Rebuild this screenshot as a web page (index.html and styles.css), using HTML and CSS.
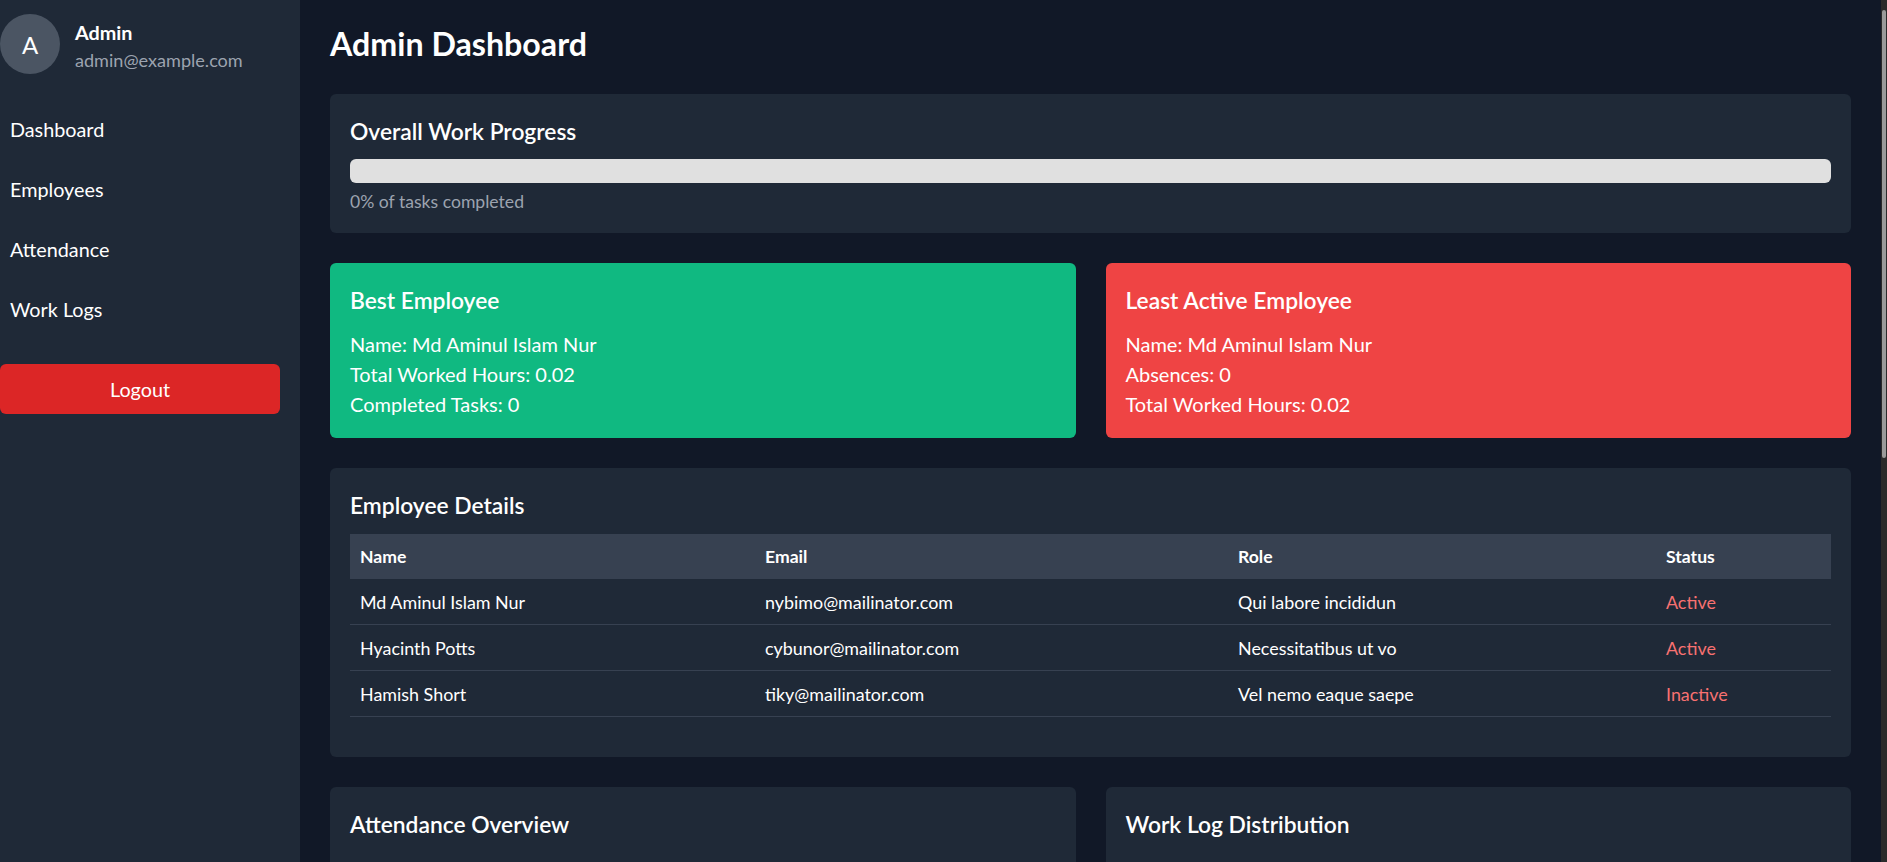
FILE: index.html
```html
<!DOCTYPE html>
<html lang="en">
<head>
<meta charset="utf-8">
<title>Admin Dashboard</title>
<link rel="stylesheet" href="styles.css">
</head>
<body>
<div class="layout">
  <aside class="sidebar">
    <div class="profile">
      <div class="avatar">A</div>
      <div class="who">
        <div class="who-name">Admin</div>
        <div class="who-email">admin@example.com</div>
      </div>
    </div>
    <nav class="nav">
      <a class="nav-link" href="#">Dashboard</a>
      <a class="nav-link" href="#">Employees</a>
      <a class="nav-link" href="#">Attendance</a>
      <a class="nav-link" href="#">Work Logs</a>
    </nav>
    <button class="logout" type="button">Logout</button>
  </aside>

  <main class="main">
    <h1 class="page-title">Admin Dashboard</h1>

    <section class="card progress-card">
      <h2 class="card-title">Overall Work Progress</h2>
      <div class="progress-track"><div class="progress-fill" style="width:0%"></div></div>
      <p class="progress-label">0% of tasks completed</p>
    </section>

    <div class="grid-2">
      <section class="card card-green">
        <h2 class="card-title">Best Employee</h2>
        <p class="stat-line">Name: Md Aminul Islam Nur</p>
        <p class="stat-line">Total Worked Hours: 0.02</p>
        <p class="stat-line">Completed Tasks: 0</p>
      </section>
      <section class="card card-red">
        <h2 class="card-title">Least Active Employee</h2>
        <p class="stat-line">Name: Md Aminul Islam Nur</p>
        <p class="stat-line">Absences: 0</p>
        <p class="stat-line">Total Worked Hours: 0.02</p>
      </section>
    </div>

    <section class="card">
      <h2 class="card-title">Employee Details</h2>
      <div class="table-wrap">
        <table class="emp-table">
          <thead>
            <tr><th>Name</th><th>Email</th><th>Role</th><th>Status</th></tr>
          </thead>
          <tbody>
            <tr><td>Md Aminul Islam Nur</td><td>nybimo@mailinator.com</td><td>Qui labore incididun</td><td class="status">Active</td></tr>
            <tr><td>Hyacinth Potts</td><td>cybunor@mailinator.com</td><td>Necessitatibus ut vo</td><td class="status">Active</td></tr>
            <tr><td>Hamish Short</td><td>tiky@mailinator.com</td><td>Vel nemo eaque saepe</td><td class="status">Inactive</td></tr>
          </tbody>
        </table>
      </div>
    </section>

    <div class="grid-2">
      <section class="card chart-card">
        <h2 class="card-title">Attendance Overview</h2>
        <div class="chart"></div>
      </section>
      <section class="card chart-card">
        <h2 class="card-title">Work Log Distribution</h2>
        <div class="chart"></div>
      </section>
    </div>
  </main>

  <div class="scrollbar" aria-hidden="true">
    <div class="scrollbar-thumb"></div>
  </div>
</div>
</body>
</html>
```

FILE: styles.css
```css
html, body {
  margin: 0;
  padding: 0;
}

body {
  background: #111827;
  color: #ffffff;
  font-family: "Lato", "Open Sans", sans-serif;
}

.layout {
  display: flex;
  min-height: 100vh;
}

/* Sidebar */
.sidebar {
  width: 300px;
  flex-shrink: 0;
  box-sizing: border-box;
  background: #1f2937;
  padding: 14px 20px 0 0;
}

.profile {
  display: flex;
  align-items: flex-start;
  gap: 15px;
}

.avatar {
  width: 60px;
  height: 60px;
  border-radius: 50%;
  background: #4b5563;
  color: #ffffff;
  font-size: 24px;
  display: flex;
  align-items: center;
  justify-content: center;
}

.who {
  margin-top: 4px;
}

.who-name {
  font-size: 19.8px;
  font-weight: 700;
  line-height: 28px;
}

.who-email {
  font-size: 18.1px;
  line-height: 28px;
  color: #9ca3af;
}

.nav {
  margin-top: 25px;
}

.nav-link {
  display: block;
  padding: 15px 10px;
  line-height: 30px;
  font-size: 19.8px;
  color: #ffffff;
  text-decoration: none;
}

.logout {
  display: block;
  width: 100%;
  height: 50px;
  margin-top: 25px;
  border: none;
  border-radius: 6px;
  background: #dc2626;
  color: #ffffff;
  font-family: inherit;
  font-size: 19.8px;
  cursor: pointer;
}

/* Main */
.main {
  flex: 1;
  min-width: 0;
  padding: 23px 30px 30px;
  display: flex;
  flex-direction: column;
  gap: 30px;
}

.page-title {
  margin: 0;
  font-size: 32.2px;
  line-height: 41px;
  font-weight: 700;
}

.card {
  background: #1f2937;
  border-radius: 6px;
  padding: 20px;
}

.card-title {
  margin: 0;
  font-size: 22.8px;
  line-height: 35px;
  font-weight: 600;
}

.progress-track {
  margin-top: 10px;
  height: 24px;
  border-radius: 6px;
  background: #e0e0e0;
  overflow: hidden;
}

.progress-fill {
  height: 100%;
  background: #10b981;
}

.progress-label {
  margin: 8px 0 0;
  font-size: 17.6px;
  line-height: 22px;
  color: #9ca3af;
}

.grid-2 {
  display: grid;
  grid-template-columns: 1fr 1fr;
  gap: 30px;
}

.card-green {
  background: #10b981;
}

.card-red {
  background: #ef4444;
}

.stat-line {
  margin: 0;
  font-size: 20px;
  line-height: 30px;
}

.card-title + .stat-line {
  margin-top: 11px;
}

.stat-line:last-child {
  margin-bottom: -1px;
}

/* Table */
.table-wrap {
  margin-top: 11px;
  margin-bottom: 20px;
}

.emp-table {
  width: 100%;
  border-collapse: collapse;
  table-layout: fixed;
  font-size: 17.9px;
  line-height: 25px;
}

.emp-table th {
  background: #374151;
  text-align: left;
  font-weight: 700;
  font-size: 17.6px;
  padding: 10px;
}

.emp-table th:nth-child(1) { width: 385px; }
.emp-table th:nth-child(2) { width: 453px; }
.emp-table th:nth-child(3) { width: 408px; }

.emp-table td {
  padding: 11px 10px 9px;
  border-bottom: 1px solid #374151;
}

.emp-table .status {
  color: #f87171;
}

.chart-card {
  min-height: 783px;
}

.chart {
  height: 100%;
}

/* Window scrollbar strip */
.scrollbar {
  width: 6px;
  flex-shrink: 0;
  background: #2b2b2b;
}

.scrollbar-thumb {
  width: 4px;
  height: 448px;
  margin: 10px 1px 0;
  border-radius: 2px;
  background: #9a9a9a;
}
```
